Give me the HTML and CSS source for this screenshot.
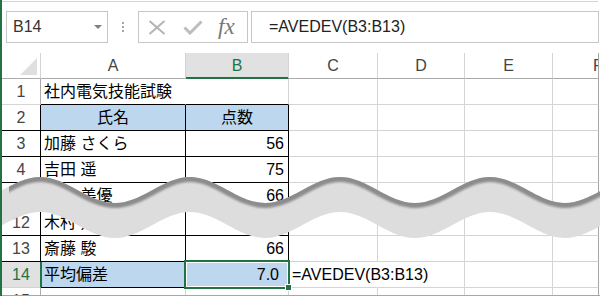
FILE: index.html
```html
<!DOCTYPE html>
<html lang="ja">

<head>
    <meta charset="UTF-8">
    <title>AVEDEV</title>
    <link rel="stylesheet" href="styles.css">
</head>

<body>
    <div class="app">
        <div class="topline"></div>
        <div class="fbar">
            <div class="namebox"><span>B14</span><i class="dd"></i></div>
            <div class="grip"><i></i><i></i><i></i></div>
            <div class="fbtns">
                <svg class="ico-x" width="18" height="15" viewBox="0 0 18 15"><path d="M1.5 1 L16.5 14 M16.5 1 L1.5 14" /></svg>
                <svg class="ico-ok" width="20" height="15" viewBox="0 0 20 15"><path d="M1.5 7.5 L7 13 L18.5 1.5" /></svg>
                <span class="fx">fx</span>
            </div>
            <div class="finput">=AVEDEV(B3:B13)</div>
        </div>

        <div class="sheet">
            <!-- header row -->
            <div class="c corner"><i class="tri"></i></div>
            <div class="c ch">A</div>
            <div class="c ch on">B</div>
            <div class="c ch">C</div>
            <div class="c ch">D</div>
            <div class="c ch">E</div>
            <div class="c ch edge cut">F</div>

            <div class="c rh">1</div>
            <div class="c top nosep">社内電気技能試験</div>
            <div class="c top"></div>
            <div class="c"></div><div class="c"></div><div class="c"></div><div class="c edge"></div>

            <div class="c rh t">2</div>
            <div class="c t hd">氏名</div>
            <div class="c t hd">点数</div>
            <div class="c"></div><div class="c"></div><div class="c"></div><div class="c edge"></div>

            <div class="c rh t">3</div>
            <div class="c t">加藤 さくら</div>
            <div class="c t num">56</div>
            <div class="c"></div><div class="c"></div><div class="c"></div><div class="c edge"></div>

            <div class="c rh t">4</div>
            <div class="c t">吉田 遥</div>
            <div class="c t num">75</div>
            <div class="c"></div><div class="c"></div><div class="c"></div><div class="c edge"></div>

            <div class="c rh t">11</div>
            <div class="c t">山本 美優</div>
            <div class="c t num">66</div>
            <div class="c"></div><div class="c"></div><div class="c"></div><div class="c edge"></div>

            <div class="c rh t">12</div>
            <div class="c t">木村 翔太</div>
            <div class="c t num">71</div>
            <div class="c"></div><div class="c"></div><div class="c"></div><div class="c edge"></div>

            <div class="c rh t">13</div>
            <div class="c t">斎藤 駿</div>
            <div class="c t num">66</div>
            <div class="c"></div><div class="c"></div><div class="c"></div><div class="c edge"></div>

            <div class="c rh sel">14</div>
            <div class="c t blue first">平均偏差</div>
            <div class="c t blue num cur">7.0</div>
            <div class="c over">=AVEDEV(B3:B13)</div>
            <div class="c"></div><div class="c"></div><div class="c edge"></div>

            <div class="c rh">15</div>
            <div class="c"></div><div class="c"></div><div class="c"></div><div class="c"></div><div class="c"></div><div class="c edge"></div>
        </div>

        <svg class="wave" width="600" height="296" viewBox="0 0 600 296">
            <defs>
                <path id="edgeLine" d="M -35 203 C -8 203 13 177 40 177 S 88 203 115 203 S 163 177 190 177 S 238 203 265 203 S 313 177 340 177 S 388 203 415 203 S 463 177 490 177 S 538 203 565 203 S 613 177 640 177" />
                <clipPath id="bandClip">
                    <path d="M -35 203 C -8 203 13 177 40 177 S 88 203 115 203 S 163 177 190 177 S 238 203 265 203 S 313 177 340 177 S 388 203 415 203 S 463 177 490 177 S 538 203 565 203 S 613 177 640 177 L 640 212 C 613 212 592 238 565 238 S 517 212 490 212 S 442 238 415 238 S 367 212 340 212 S 292 238 265 238 S 217 212 190 212 S 142 238 115 238 S 67 212 40 212 S -8 238 -35 238 Z" />
                </clipPath>
                <clipPath id="fromLeft"><rect x="9" y="0" width="600" height="296" /></clipPath>
                <filter id="soft" x="-10%" y="-50%" width="120%" height="200%"><feGaussianBlur stdDeviation="1.2" /></filter>
            </defs>
            <path class="band" d="M -35 203 C -8 203 13 177 40 177 S 88 203 115 203 S 163 177 190 177 S 238 203 265 203 S 313 177 340 177 S 388 203 415 203 S 463 177 490 177 S 538 203 565 203 S 613 177 640 177 L 640 212 C 613 212 592 238 565 238 S 517 212 490 212 S 442 238 415 238 S 367 212 340 212 S 292 238 265 238 S 217 212 190 212 S 142 238 115 238 S 67 212 40 212 S -8 238 -35 238 Z" />
            <g clip-path="url(#bandClip)">
                <g clip-path="url(#fromLeft)">
                    <use href="#edgeLine" class="shade" filter="url(#soft)" />
                </g>
            </g>
        </svg>
    </div>
</body>

</html>
```

FILE: styles.css
```css
body { margin: 0; background: #fff; font-family: "Liberation Sans", "Noto Sans CJK JP", sans-serif; }
.app { position: relative; width: 598px; height: 296px; border-left: 2px solid #217346; overflow: hidden; background: #fff; }
.topline { height: 1px; margin-top: 1px; margin-right: 2px; background: #d4d4d4; }

/* formula bar */
.fbar { display: flex; height: 32px; margin-top: 9px; }
.namebox { display: flex; align-items: center; width: 102px; margin-left: 4px; padding-left: 6px; border: 1px solid #c6c6c6; box-sizing: border-box; font-size: 16px; color: #333; }
.dd { margin-left: auto; margin-right: 5px; width: 0; height: 0; border-left: 4px solid transparent; border-right: 4px solid transparent; border-top: 4px solid #808080; }
.grip { display: flex; flex-direction: column; align-items: center; justify-content: center; gap: 2px; width: 30px; }
.grip i { display: block; width: 2px; height: 2px; background: #a6a6a6; }
.fbtns { display: flex; align-items: center; width: 110px; padding-left: 9px; border: 1px solid #c6c6c6; box-sizing: border-box; }
.ico-x path { stroke: #b4b4b4; stroke-width: 2; fill: none; }
.ico-ok { margin-left: 17px; }
.ico-ok path { stroke: #bdbdbd; stroke-width: 3; fill: none; }
.fx { margin-left: 15px; font-family: "Liberation Serif", serif; font-style: italic; font-size: 23px; color: #777; letter-spacing: 0; }
.finput { display: flex; align-items: center; width: 348px; margin-left: 3px; padding-left: 17px; border: 1px solid #c6c6c6; box-sizing: border-box; font-size: 16px; color: #222; }

/* sheet grid */
.sheet { display: grid; grid-template-columns: 39px 145px 103px 89px 87px 88px 46px; grid-template-rows: 26px 26px 26px 26px 26px 27px 26px 26px 26px 26px; height: 242px; margin-top: 10px; overflow: hidden; border-bottom: 1px solid #a6a6a6; }
.c { display: flex; align-items: center; padding: 0 3px; box-sizing: border-box; border-right: 1px solid #d4d4d4; border-bottom: 1px solid #d4d4d4; font-size: 16px; line-height: 18px; color: #000; white-space: nowrap; overflow: hidden; }
.c.edge { border-right-color: #a6a6a6; }

.corner { justify-content: flex-end; align-items: flex-end; padding: 0 3px 3px 0; border-bottom-color: #ababab; }
.tri { display: block; width: 0; height: 0; border-left: 17px solid transparent; border-bottom: 17px solid #dfdfdf; }
.ch { justify-content: center; color: #444; border-bottom-color: #ababab; }
.ch.on { background: #e1e1e1; color: #217346; border-bottom-color: #217346; box-shadow: inset 0 -1px #217346; }
.ch.cut { justify-content: flex-start; padding-left: 40px; }
.rh { justify-content: center; color: #444; border-right-color: #ababab; }
.rh.t { border-right-color: #000; }
.rh.sel { background: #e1e1e1; color: #217346; border-right-color: #217346; }

/* table cells */
.top { border-bottom-color: #000; }
.nosep { border-right-color: transparent; }
.t { border-right-color: #000; border-bottom-color: #000; }
.hd { justify-content: center; background: #bdd7ee; }
.num { justify-content: flex-end; padding-right: 4px; }
.blue { background: #bdd7ee; }
.first { box-shadow: inset 1px 0 #217346; }
.cur { position: relative; overflow: visible; padding-right: 9px; }
.cur::after { content: ""; position: absolute; left: -2px; top: -2px; right: -2px; bottom: -2px; border: 2px solid #217346; box-shadow: inset 0 0 0 1px #fff; }
.cur::before { content: ""; position: absolute; right: -4px; bottom: -4px; width: 5px; height: 5px; background: #217346; border: 1px solid #fff; z-index: 1; }
.over { overflow: visible; border-right-color: transparent; }

/* torn-page wave */
.wave { position: absolute; left: -2px; top: 0; }
.band { fill: #dddddd; }
.shade { fill: none; stroke: #8c8c8c; stroke-width: 10; }
```
